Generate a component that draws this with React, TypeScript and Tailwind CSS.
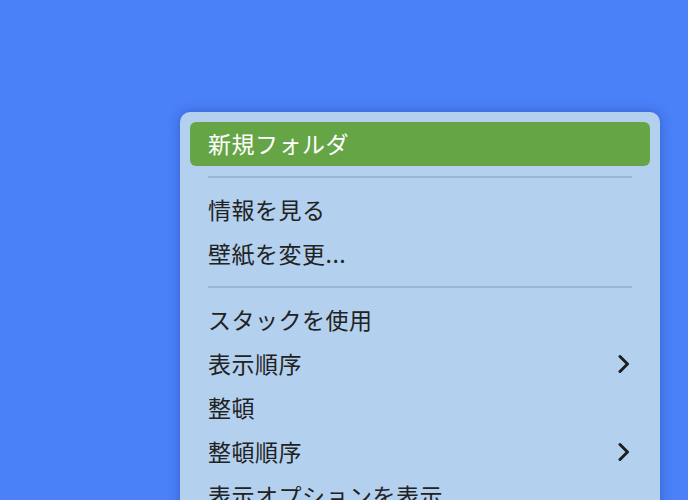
const Chevron = () => (
  <svg width="12" height="20" viewBox="0 0 12 20" className="shrink-0">
    <path d="M2 2.5 L9.5 10 L2 17.5" fill="none" stroke="#1e1e1e" strokeWidth="3" strokeLinecap="round" strokeLinejoin="round" />
  </svg>
);

type Item = { label: string; active?: boolean; sub?: boolean };

const groups: Item[][] = [
  [{ label: '新規フォルダ', active: true }],
  [{ label: '情報を見る' }, { label: '壁紙を変更...' }],
  [
    { label: 'スタックを使用' },
    { label: '表示順序', sub: true },
    { label: '整頓' },
    { label: '整頓順序', sub: true },
    { label: '表示オプションを表示' },
  ],
];

const MenuRow = ({ item }: { item: Item }) => (
  <div
    className={
      item.active
        ? 'h-[44px] flex items-center justify-between rounded-[6px] bg-[#65a546] text-white pl-[18px] pr-[20px]'
        : 'h-[44px] flex items-center justify-between pl-[18px] pr-[20px] text-[#222222]'
    }
  >
    <span className="text-[23px] leading-none tracking-[0.5px] -mt-[2px] whitespace-nowrap">{item.label}</span>
    {item.sub && <Chevron />}
  </div>
);

export default function App() {
  return (
    <div
      className="w-[688px] h-[500px] overflow-hidden bg-[#4a80f8] pt-[112px] pl-[180px]"
      style={{ fontFamily: '"Noto Sans CJK JP", "Noto Sans", sans-serif' }}
    >
      <div className="w-[480px] rounded-[10px] bg-[#b3d1ee] p-[10px] shadow-[0_0_12px_rgba(20,40,120,0.35)]">
        {groups.map((g, gi) => (
          <div key={gi}>
            {gi > 0 && (
              <div className="py-[10px] px-[18px]">
                <div className="h-[2px] bg-[#9ab6d6]" />
              </div>
            )}
            {g.map((item) => (
              <MenuRow key={item.label} item={item} />
            ))}
          </div>
        ))}
      </div>
    </div>
  );
}
